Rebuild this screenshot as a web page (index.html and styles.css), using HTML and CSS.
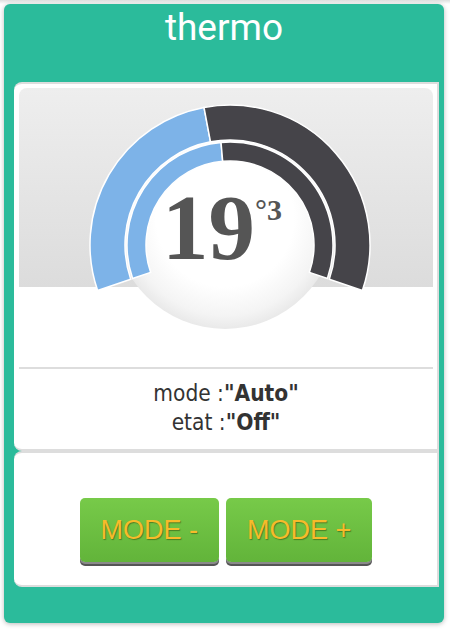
FILE: index.html
```html
<!DOCTYPE html>
<html lang="fr">
<head>
<meta charset="utf-8">
<title>thermo</title>
<link rel="stylesheet" href="styles.css">
</head>
<body>
<div class="card">
  <div class="card-title">thermo</div>
  <div class="panel panel-gauge">
    <div class="gauge">
      <svg class="gauge-svg" width="414" height="279" viewBox="0 0 414 279" xmlns="http://www.w3.org/2000/svg">
        <defs>
          <radialGradient id="knobGrad" cx="50%" cy="50%" r="50%">
            <stop offset="0%" stop-color="#ffffff"/>
            <stop offset="62%" stop-color="#ffffff"/>
            <stop offset="88%" stop-color="#f4f4f4"/>
            <stop offset="100%" stop-color="#e9e9e9"/>
          </radialGradient>
        </defs>
        <circle cx="206" cy="130" r="111" fill="url(#knobGrad)"/>
        <g stroke="#ffffff" stroke-width="1.5">
          <path fill="#7db3e8" d="M 78.63 202.58 A 140 140 0 0 1 185.0 19.44 L 191.5 53.83 A 105 105 0 0 0 111.72 191.19 Z"/>
          <path fill="#454449" d="M 185.0 19.44 A 140 140 0 0 1 343.37 202.58 L 310.28 191.19 A 105 105 0 0 0 191.5 53.83 Z"/>
          <path fill="#7db3e8" d="M 113.61 190.54 A 103 103 0 0 1 202.02 54.39 L 203.68 73.32 A 84 84 0 0 0 131.58 184.35 Z"/>
          <path fill="#454449" d="M 202.02 54.39 A 103 103 0 0 1 308.39 190.54 L 290.42 184.35 A 84 84 0 0 0 203.68 73.32 Z"/>
        </g>
      </svg>
      <div class="temp">19<span class="temp-dec">°3</span></div>
    </div>
    <div class="divider"></div>
    <div class="info">
      <div>mode :<b>"Auto"</b></div>
      <div>etat :<b>"Off"</b></div>
    </div>
  </div>
  <div class="panel panel-buttons">
    <button class="btn">MODE -</button>
    <button class="btn">MODE +</button>
  </div>
</div>
</body>
</html>
```
FILE: styles.css
```css
html, body {
  margin: 0;
  padding: 0;
}

body {
  background: linear-gradient(#dedede, #ffffff 4px);
  width: 450px;
  height: 642px;
  overflow: hidden;
}

.card {
  margin: 4px 0 0 4px;
  width: 440px;
  box-sizing: border-box;
  padding: 0 5px 36px 10px;
  background: #2bbb9b;
  border-radius: 6px;
  box-shadow: 0 1px 5px rgba(0, 0, 0, 0.28);
}

.card-title {
  margin: 0 -5px 0 -10px;
  padding: 2px 0 32px;
  font-family: Roboto, "Liberation Sans", sans-serif;
  font-size: 37px;
  line-height: 44px;
  color: #ffffff;
  text-align: center;
}

.panel {
  background: #ffffff;
  border: 2px solid #dddddd;
  border-left: 0;
  border-radius: 8px 0 0 8px;
}

.panel-gauge {
  padding: 4px 4px 0 5px;
}

.gauge {
  position: relative;
  height: 279px;
  border-radius: 8px 8px 0 0;
  background: linear-gradient(#eeeeee, #dcdcdc) no-repeat;
  background-size: 100% 199px;
}

.gauge-svg {
  display: block;
}

.temp {
  position: absolute;
  left: 143px;
  top: 94px;
  font-family: "Liberation Serif", "Times New Roman", serif;
  font-weight: bold;
  font-size: 93px;
  line-height: 92px;
  color: #555555;
  white-space: nowrap;
}

.temp-dec {
  font-size: 30px;
  line-height: 30px;
  vertical-align: 39px;
}

.divider {
  height: 2px;
  background: #dddddd;
}

.info {
  padding: 10px 0 12px;
  font-family: "DejaVu Sans Condensed", "DejaVu Sans", sans-serif;
  font-stretch: condensed;
  font-size: 22.5px;
  line-height: 29px;
  color: #333333;
  text-align: center;
}

.panel-buttons {
  display: flex;
  justify-content: center;
  gap: 7px;
  padding: 45px 4px 23px 5px;
}

.btn {
  height: 64px;
  padding: 0 21px;
  border: 0;
  border-radius: 5px;
  background: linear-gradient(#77ca49, #62b43a);
  box-shadow: 0 2px 0 #8a8a8a, 0 4px 0 #555555;
  font-family: "Liberation Sans", Arial, sans-serif;
  font-size: 27px;
  line-height: 64px;
  color: #f7bb2a;
  text-shadow: 1px 1px 1px #4b7f24;
}
```
